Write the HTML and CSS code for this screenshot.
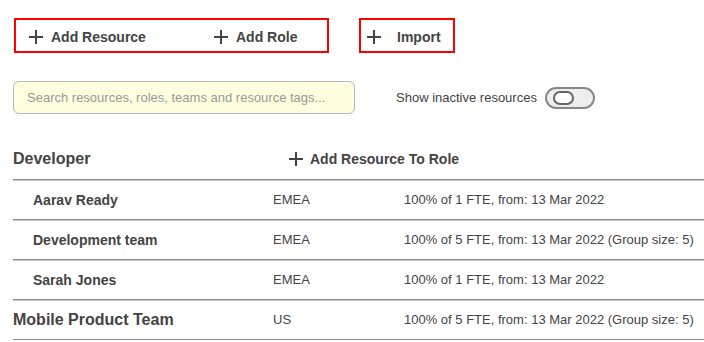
FILE: index.html
```html
<!DOCTYPE html>
<html lang="en">
<head>
  <meta charset="UTF-8" />
  <title>Resources</title>
  <link rel="stylesheet" href="styles.css">
</head>
<body>

<!-- Toolbar -->
<div class="toolbar">
  <div class="btn-group">
    <button class="add-btn res-btn"><span class="plus"></span>Add Resource</button>
    <button class="add-btn"><span class="plus"></span>Add Role</button>
  </div>
  <div class="btn-group import-group">
    <button class="add-btn import-btn"><span class="plus"></span>Import</button>
  </div>
</div>

<!-- Search + filter -->
<div class="filter-row">
  <input class="search" type="text" placeholder="Search resources, roles, teams and resource tags...">
  <label class="inactive">Show inactive resources</label>
  <div class="toggle"><div class="knob"></div></div>
</div>

<!-- Roles -->
<div class="roles">
  <div class="role-head">
    <div class="role-name">Developer</div>
    <button class="add-btn role-add"><span class="plus"></span>Add Resource To Role</button>
  </div>
  <div class="row">
    <div class="name">Aarav Ready</div>
    <div class="region">EMEA</div>
    <div class="alloc">100% of 1 FTE, from: 13 Mar 2022</div>
  </div>
  <div class="row">
    <div class="name">Development team</div>
    <div class="region">EMEA</div>
    <div class="alloc">100% of 5 FTE, from: 13 Mar 2022 (Group size: 5)</div>
  </div>
  <div class="row">
    <div class="name">Sarah Jones</div>
    <div class="region">EMEA</div>
    <div class="alloc">100% of 1 FTE, from: 13 Mar 2022</div>
  </div>
  <div class="row team-row">
    <div class="name">Mobile Product Team</div>
    <div class="region">US</div>
    <div class="alloc">100% of 5 FTE, from: 13 Mar 2022 (Group size: 5)</div>
  </div>
</div>

</body>
</html>
```

FILE: styles.css
```css
body {
  margin: 0;
  font-family: "Liberation Sans", Arial, sans-serif;
  color: #444;
  background: #fff;
  overflow: hidden;
}

.toolbar {
  display: flex;
  gap: 30px;
  padding: 18px 0 0 14px;
}

.btn-group {
  display: flex;
  align-items: center;
  width: 315px;
  height: 35px;
  box-sizing: border-box;
  border: 2px solid #f00;
  padding: 2px 0 0 13px;
}

.import-group {
  width: 96px;
  padding-left: 6px;
}

.add-btn {
  display: flex;
  align-items: center;
  border: none;
  background: none;
  padding: 0;
  font-family: inherit;
  font-size: 14px;
  font-weight: bold;
  color: #444;
  cursor: pointer;
}

.add-btn .plus {
  position: relative;
  width: 14px;
  height: 14px;
  margin-right: 8px;
}

.plus::before, .plus::after {
  content: "";
  position: absolute;
  background: #444;
}

.plus::before { left: 0; top: 6px; width: 14px; height: 2px; }
.plus::after { left: 6px; top: 0; width: 2px; height: 14px; }

.res-btn { width: 185px; }
.import-btn .plus { margin-right: 16px; }

.filter-row {
  display: flex;
  align-items: center;
  padding: 28px 0 0 13px;
}

.search {
  width: 342px;
  height: 33px;
  box-sizing: border-box;
  border: 1px solid #b5b5b5;
  border-radius: 6px;
  background: #ffffe0;
  padding: 0 13px;
  font-family: inherit;
  font-size: 13px;
  color: #444;
}

.search::placeholder { color: #999; }

.inactive {
  margin-left: 41px;
  font-size: 13px;
  color: #444;
}

.toggle {
  margin-left: 8px;
  width: 50px;
  height: 22px;
  box-sizing: border-box;
  border: 2px solid #888;
  border-radius: 11px;
  background: #eee;
  display: flex;
  align-items: center;
  padding-left: 6px;
}

.knob {
  width: 21px;
  height: 14px;
  box-sizing: border-box;
  border: 2px solid #666;
  border-radius: 7px;
  background: #fff;
}

.roles {
  margin: 25px 0 0 13px;
}

.role-head, .row {
  border-bottom: 1px solid #888;
  box-shadow: 0 1px 0 #ccc;
}

.role-head {
  display: flex;
  align-items: center;
  height: 40px;
}

.role-name {
  width: 276px;
  font-size: 16px;
  font-weight: bold;
}

.role-add .plus { margin-right: 7px; }

.row {
  display: grid;
  grid-template-columns: 260px 131px 1fr;
  align-items: center;
  height: 39px;
  font-size: 13px;
}

.row .name {
  padding-left: 20px;
  font-size: 14px;
  font-weight: bold;
}

.team-row .name {
  padding-left: 0;
  font-size: 16px;
}
```
